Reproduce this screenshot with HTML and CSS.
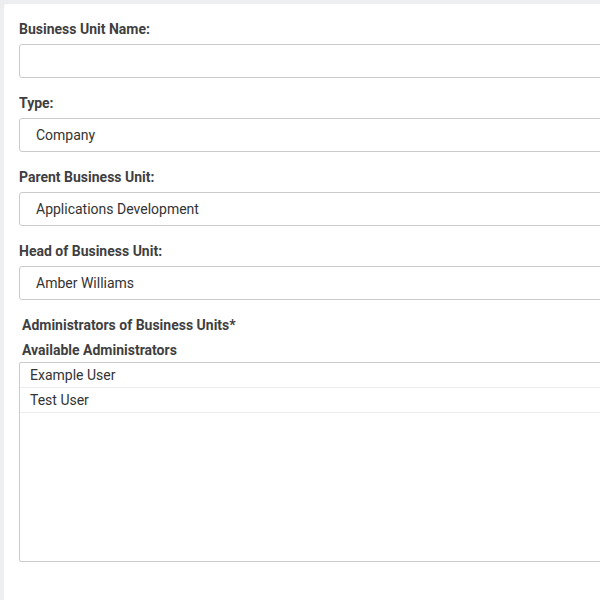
FILE: index.html
```html
<!DOCTYPE html>
<html>
<head>
<meta charset="utf-8">
<link rel="stylesheet" href="styles.css">
</head>
<body>
<div class="card">
  <div class="field">
    <label class="label">Business Unit Name:</label>
    <div class="input"></div>
  </div>
  <div class="field">
    <label class="label">Type:</label>
    <div class="input select">Company</div>
  </div>
  <div class="field">
    <label class="label">Parent Business Unit:</label>
    <div class="input select">Applications Development</div>
  </div>
  <div class="field">
    <label class="label">Head of Business Unit:</label>
    <div class="input select">Amber Williams</div>
  </div>
  <div class="admins">
    <div class="sublabel first">Administrators of Business Units*</div>
    <div class="sublabel second">Available Administrators</div>
    <div class="list">
      <div class="row">Example User</div>
      <div class="row">Test User</div>
    </div>
  </div>
</div>
</body>
</html>
```
FILE: styles.css
```css
html, body {
  margin: 0;
  padding: 0;
  background: #edeef0;
  overflow: hidden;
  width: 600px;
  height: 600px;
}
body {
  font-family: Roboto, "Liberation Sans", Arial, sans-serif;
}
.card {
  margin: 4px 0 0 4px;
  width: 720px;
  height: 620px;
  background: #fff;
  border-radius: 3px;
  padding: 16px 0 0 15px;
  box-sizing: border-box;
}
.field {
  display: flex;
  flex-direction: column;
  margin-bottom: 16px;
}
.label, .sublabel {
  font-size: 14px;
  font-weight: 700;
  line-height: 18px;
  color: #3f3f42;
  display: block;
}
.label {
  margin-bottom: 6px;
}
.input {
  height: 34px;
  box-sizing: border-box;
  border: 1px solid #cbcbcb;
  border-radius: 3px;
  font-size: 14px;
  color: #333;
  line-height: 32px;
  padding-left: 16px;
  width: 100%;
}
.sublabel {
  padding-left: 3px;
}
.sublabel.first {
  margin-bottom: 7px;
}
.sublabel.second {
  margin-bottom: 3px;
}
.list {
  height: 200px;
  box-sizing: border-box;
  border: 1px solid #cbcbcb;
  border-radius: 2px;
  width: 100%;
}
.row {
  height: 25px;
  line-height: 24px;
  box-sizing: border-box;
  border-bottom: 1px solid #ececec;
  padding-left: 10px;
  font-size: 14px;
  color: #333;
}
```
